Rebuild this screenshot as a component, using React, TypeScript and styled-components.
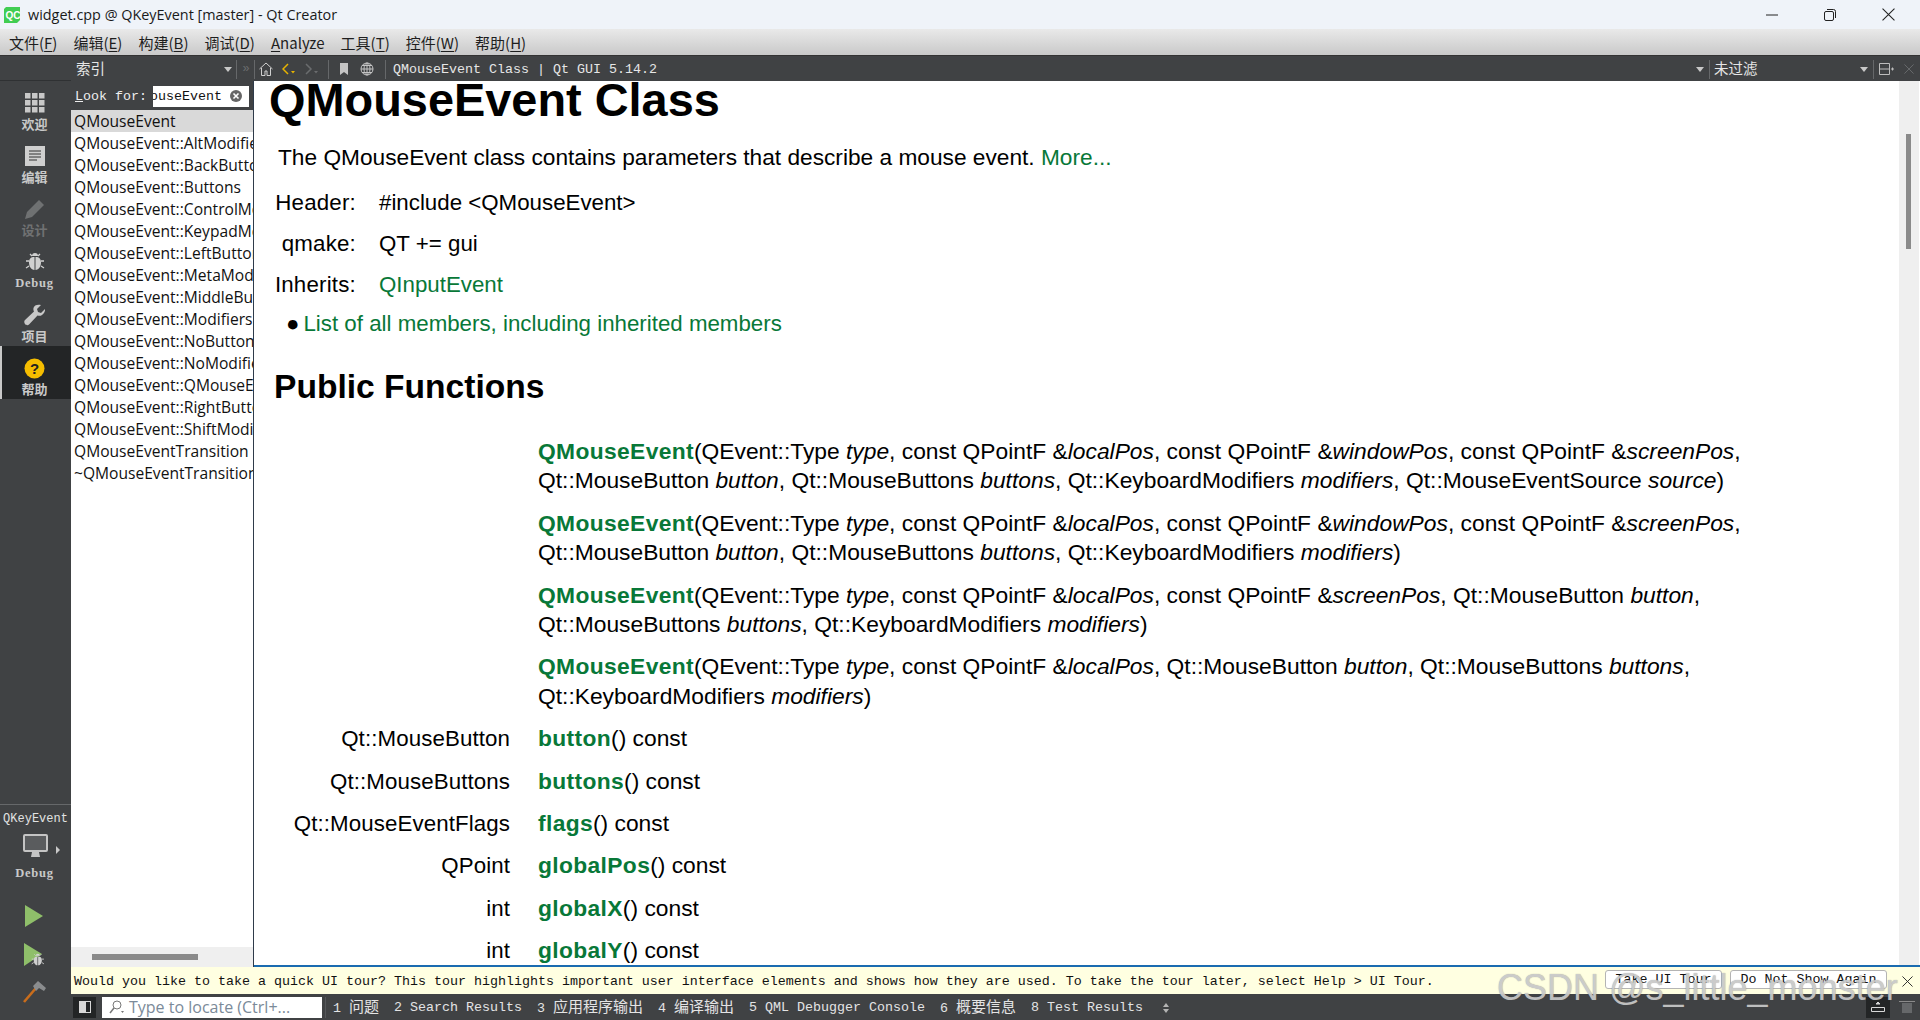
import React from 'react';
import styled, {createGlobalStyle} from 'styled-components';

const MONO = `"Liberation Mono", "Noto Sans CJK SC", monospace`;
const UI = `"Open Sans", "Noto Sans CJK SC", sans-serif`;
const CJK = `"Noto Sans CJK SC", sans-serif`;
const DARK = '#404244';
const GREEN = '#087838';

const Global = createGlobalStyle`
  html, body { margin: 0; padding: 0; overflow: hidden; background: ${DARK}; }
  * { box-sizing: border-box; }
`;

const Window = styled.div`
  position: relative;
  width: 1920px;
  height: 1020px;
  display: flex;
  flex-direction: column;
  overflow: hidden;
`;

const TitleBar = styled.div`
  height: 29px;
  background: #eff3f9;
  display: flex;
  align-items: center;
  padding: 0 3px 0 4px;
  font: 14.4px ${UI};
  color: #1a1a1a;
`;
const TitleText = styled.span`
  margin-left: 8px;
  flex: 1;
`;
const WinBtn = styled.div`
  width: 58px;
  height: 29px;
  display: flex;
  align-items: center;
  justify-content: center;
`;

const MenuBar = styled.div`
  height: 27px;
  background: linear-gradient(#e9e9e9, #c9c9c9);
  border-bottom: 1px solid #333;
  display: flex;
  align-items: center;
  padding-left: 1px;
  font: 15px ${CJK};
  color: #1e1e1e;
`;
const MenuItem = styled.span`
  padding: 0 8px;
  u { text-underline-offset: 2px; }
`;

const Main = styled.div`
  flex: 1;
  display: flex;
  min-height: 0;
`;

const Rail = styled.div`
  width: 71px;
  background: ${DARK};
  display: flex;
  flex-direction: column;
  align-items: stretch;
  padding-bottom: 10px;
`;
const RailTop = styled.div`
  height: 25px;
  border-bottom: 1px solid #2f3133;
`;
const RailItem = styled.div<{$active?: boolean; $dim?: boolean}>`
  height: 53px;
  display: flex;
  flex-direction: column;
  align-items: center;
  padding: 11px 2px 0 0;
  background: ${p => (p.$active ? '#232526' : 'transparent')};
  box-shadow: ${p => (p.$active ? 'inset 2px 0 0 #c8c8c8' : 'none')};
  opacity: ${p => (p.$dim ? 0.35 : 1)};
`;
const IconSlot = styled.div`
  height: 22px;
  display: flex;
  align-items: center;
  justify-content: center;
`;
const RailLabel = styled.span<{$mono?: boolean}>`
  margin-top: 2px;
  font: bold ${p => (p.$mono ? '12.5px' : '13px')} ${p => (p.$mono ? `"Liberation Serif", serif` : CJK)};
  line-height: 16px;
  letter-spacing: ${p => (p.$mono ? '0.8px' : '0')};
  color: #c9c9c9;
`;
const RailSpacer = styled.div`
  flex: 1;
  border-bottom: 1px solid #66686a;
`;
const KitName = styled.div`
  height: 28px;
  text-align: center;
  font: 12px/28px ${MONO};
  color: #e2e2e2;
`;
const KitIcon = styled.div`
  height: 27px;
  display: flex;
  align-items: center;
  padding-left: 23px;
`;
const KitArrow = styled.div`
  width: 0;
  height: 0;
  margin: 6px 0 0 8px;
  border-top: 4px solid transparent;
  border-bottom: 4px solid transparent;
  border-left: 4px solid #c8c8c8;
`;
const KitLabel = styled.div`
  height: 26px;
  margin-bottom: 10px;
  padding-right: 2px;
  font: bold 12.5px/26px "Liberation Serif", serif;
  letter-spacing: 0.8px;
  text-align: center;
  color: #c9c9c9;
`;
const RunBtn = styled.div<{$h: number}>`
  height: ${p => p.$h}px;
  padding-right: 2px;
  display: flex;
  align-items: center;
  justify-content: center;
`;

const Workspace = styled.div`
  flex: 1;
  min-width: 0;
  display: flex;
  flex-direction: column;
`;

const Toolbar = styled.div`
  height: 25px;
  padding-top: 1px;
  background: ${DARK};
  display: flex;
  align-items: center;
  color: #e6e6e6;
  font: 13.33px ${MONO};
`;
const ComboCell = styled.div`
  width: 153px;
  height: 22px;
  flex: none;
  padding-left: 5px;
  font: 14.5px/20px ${CJK};
`;
const ToolBtn = styled.div<{$w: number}>`
  width: ${p => p.$w}px;
  height: 24px;
  flex: none;
  display: flex;
  align-items: center;
  justify-content: center;
`;
const ToolSep = styled.div`
  width: 1px;
  height: 19px;
  flex: none;
  background: #66686a;
`;
const Overflow = styled.span`
  font-size: 12px;
  letter-spacing: -1px;
  color: #6a6c6e;
`;
const DocTitle = styled.div`
  flex: 1;
  padding-left: 7px;
  white-space: pre;
`;
const FilterLabel = styled.div`
  width: 150px;
  height: 22px;
  flex: none;
  padding-left: 4px;
  font: 14.5px/20px ${CJK};
`;
const Caret = styled.div`
  width: 0;
  height: 0;
  flex: none;
  border-left: 4px solid transparent;
  border-right: 4px solid transparent;
  border-top: 5px solid #c8c8c8;
`;

const HelpBody = styled.div`
  flex: 1;
  min-height: 0;
  display: flex;
`;

const IndexPanel = styled.div`
  width: 183px;
  flex: none;
  display: flex;
  flex-direction: column;
  background: #fff;
  border-right: 1px solid #2f3b4a;
`;
const LookFor = styled.div`
  height: 29px;
  flex: none;
  background: ${DARK};
  display: flex;
  align-items: center;
  padding: 1px 0 0 4px;
  color: #eee;
  font: 13.33px ${MONO};
`;
const LookInput = styled.div`
  width: 96px;
  height: 21px;
  margin-left: 6px;
  background: #fff;
  color: #111;
  display: flex;
  align-items: center;
  overflow: hidden;
  padding-right: 7px;
  justify-content: flex-end;
  gap: 8px;
`;
const LookText = styled.span`
  flex: none;
  white-space: nowrap;
`;
const IndexList = styled.div`
  flex: 1;
  overflow: hidden;
`;
const IndexRow = styled.div<{$selected?: boolean}>`
  height: 22px;
  padding-left: 3px;
  font: 15.6px/22px ${UI};
  color: #111;
  white-space: nowrap;
  overflow: hidden;
  background: ${p => (p.$selected ? '#d9d9d9' : 'transparent')};
`;
const HScroll = styled.div`
  height: 20px;
  flex: none;
  background: #efefef;
  padding: 7px 0 0 21px;
`;
const HThumb = styled.div`
  width: 106px;
  height: 6px;
  background: #8a8a8a;
`;

const DocFrame = styled.div`
  flex: 1;
  min-width: 0;
  display: flex;
  background: #fff;
  border-bottom: 2px solid #1a6bb0;
`;
const Doc = styled.div`
  flex: 1;
  min-width: 0;
  overflow: hidden;
  padding-left: 16px;
  font-family: "Liberation Sans", sans-serif;
  color: #000;
`;
const VScroll = styled.div`
  width: 21px;
  flex: none;
  background: #efefef;
  padding: 53px 8px 0 7px;
  border-right: 1px solid #fff;
`;
const VThumb = styled.div`
  height: 115px;
  background: #8a8a8a;
`;

const H1 = styled.h1`
  margin: -1px 0 0 -1px;
  font-size: 46.9px;
  font-weight: bold;
  line-height: 40px;
`;
const Intro = styled.p`
  margin: 22px 0 0 8px;
  font-size: 22.7px;
  line-height: 30px;
`;
const DocLink = styled.a`
  color: ${GREEN};
`;
const Meta = styled.div`
  display: grid;
  grid-template-columns: 86px 1fr;
  column-gap: 23px;
  row-gap: 11px;
  margin-top: 16px;
  font-size: 22.3px;
  line-height: 30px;
`;
const MetaKey = styled.div`
  text-align: right;
  letter-spacing: 0.2px;
`;
const Bullet = styled.div`
  margin: 9px 0 0 16px;
  font-size: 22.3px;
  line-height: 30px;
  display: flex;
  gap: 4px;
`;
const H2 = styled.h2`
  margin: 28px 0 0 4px;
  font-size: 33.6px;
  font-weight: bold;
  line-height: 40px;
`;
const FnTable = styled.div`
  display: grid;
  grid-template-columns: 240px 1fr;
  column-gap: 28px;
  row-gap: 13px;
  margin-top: 30px;
  font-size: 22.8px;
  line-height: 29.4px;
`;
const FnType = styled.div`
  text-align: right;
  font-size: 22.3px;
  letter-spacing: 0.1px;
`;
const FnSig = styled.div`
  padding-right: 90px;
`;
const FnName = styled.b`
  color: ${GREEN};
  letter-spacing: 0.36px;
`;

const TourBar = styled.div`
  height: 27px;
  flex: none;
  background: #ffffe1;
  display: flex;
  align-items: center;
  padding: 1px 0 0 3px;
  font: 13.33px ${MONO};
  color: #111;
`;
const TourText = styled.div`
  flex: 1;
  white-space: nowrap;
`;
const TourBtn = styled.div<{$w: number}>`
  width: ${p => p.$w}px;
  height: 19px;
  margin: 0 8px 3px 0;
  background: #fff;
  border: 1px solid #b4b4b4;
  border-radius: 3px;
  text-align: center;
  line-height: 17px;
`;
const TourClose = styled.div`
  width: 25px;
  display: flex;
  justify-content: center;
`;

const StatusBar = styled.div`
  height: 26px;
  flex: none;
  background: ${DARK};
  display: flex;
  align-items: center;
  color: #e4e4e4;
  font: 13.33px ${MONO};
`;
const SideToggle = styled.div`
  width: 23px;
  height: 21px;
  margin-left: 2px;
  background: #232526;
  display: flex;
  align-items: center;
  justify-content: center;
`;
const Locate = styled.div`
  width: 220px;
  height: 21px;
  margin: 0 3px 0 6px;
  background: #fff;
  display: flex;
  align-items: center;
  gap: 4px;
  padding-left: 7px;
  font: 16px ${UI};
  color: #7b8a99;
  white-space: nowrap;
  overflow: hidden;
`;
const Tabs = styled.div`
  flex: 1;
  display: flex;
  align-items: center;
  gap: 15px;
  padding: 1px 0 0 7px;
  border-left: 1px solid #55575a;
  height: 21px;
`;
const Tab = styled.span`
  white-space: pre;
  line-height: 18px;
`;
const TabCjk = styled.span`
  font: 15px/15px ${CJK};
`;
const TabUpDown = styled.div`
  display: flex;
  flex-direction: column;
  gap: 2px;
  margin-left: 5px;
`;
const ArrowUp = styled.div`
  width: 0;
  height: 0;
  border-left: 3px solid transparent;
  border-right: 3px solid transparent;
  border-bottom: 4px solid #b4b4b4;
`;
const ArrowDown = styled(ArrowUp)`
  transform: rotate(180deg);
`;
const PaneBtn = styled.div<{$on?: boolean}>`
  width: 24px;
  height: 21px;
  margin-right: ${p => (p.$on ? '5px' : '1px')};
  background: ${p => (p.$on ? '#232526' : 'transparent')};
  display: flex;
  align-items: center;
  justify-content: center;
`;

const Watermark = styled.div`
  position: absolute;
  left: 1497px;
  top: 964px;
  font: 36px/48px "Liberation Sans", sans-serif;
  color: rgba(212, 212, 212, 0.85);
  text-shadow: 0 0 1px rgba(90, 90, 90, 0.6);
  white-space: nowrap;
  pointer-events: none;
`;

const QcLogo = () => (
  <svg width="16" height="16" viewBox="0 0 16 16">
    <path d="M2 0h14v13l-3 3H0V2z" fill="#41cd52" />
    <text x="1.5" y="12" fontSize="10" fontWeight="bold" fontFamily="Liberation Sans" fill="#fff">QC</text>
  </svg>
);
const GridIcon = () => (
  <svg width="20" height="20" viewBox="0 0 20 20" fill="#c8c8c8">
    {[0, 7, 14].flatMap(y => [0, 7, 14].map(x => <rect key={`${x}${y}`} x={x} y={y} width="5.5" height="5.5" />))}
  </svg>
);
const EditIcon = () => (
  <svg width="20" height="20" viewBox="0 0 20 20">
    <rect width="20" height="20" fill="#cfcfcf" />
    <path d="M4 5h12M4 8h12M4 11h12M4 14h8" stroke="#333" strokeWidth="1" />
  </svg>
);
const PencilIcon = () => (
  <svg width="22" height="22" viewBox="0 0 22 22" fill="#c8c8c8">
    <path d="M1 21l2-7L15 2l5 5L8 19z" />
  </svg>
);
const BugIcon = ({size = 20}: {size?: number}) => (
  <svg width={size} height={size} viewBox="0 0 20 20" fill="#d0d0d0">
    <path d="M7 4a3 3 0 016 0z" />
    <path d="M9.5 5v13C6 18 4 14 4 10.5 4 7 5.5 5 9.5 5zM10.5 5c4 0 5.500 2 5.500 5.500 0 3.500-2 7.500-5.500 7.500z" />
    <path d="M5 2l2 2M15 2l-2 2M1 9h3M19 9h-3M1 16l3-2M19 16l-3-2" stroke="#d0d0d0" strokeWidth="1.300" />
  </svg>
);
const WrenchIcon = () => (
  <svg width="22" height="22" viewBox="0 0 22 22" fill="#c8c8c8">
    <path d="M21 5l-4 4-3-1-1-3 4-4c-3-1-7 0-7.500 3-.3 1.500 0 2.500.5 3.500L1 16c-1 1-1 2.500 0 4s3 1.500 4 .5l8.500-9c1.500.5 3 .5 4.500-.5 2-1.500 3.500-4 3-6z" />
  </svg>
);
const HelpIcon = () => (
  <svg width="21" height="21" viewBox="0 0 21 21">
    <circle cx="10.500" cy="10.500" r="10" fill="#f5bd00" />
    <text x="10.500" y="16" textAnchor="middle" fontSize="15" fontWeight="bold" fontFamily="Liberation Sans" fill="#222">?</text>
  </svg>
);
const MonitorIcon = () => (
  <svg width="25" height="25" viewBox="0 0 25 25">
    <rect x="1" y="1" width="23" height="16" rx="1" fill="#5a5c5e" stroke="#c4c4c4" strokeWidth="2" />
    <path d="M9 18h7l1 5H8z" fill="#c4c4c4" />
  </svg>
);
const PlayIcon = () => (
  <svg width="20" height="22" viewBox="0 0 20 22">
    <path d="M0 0l18 11L0 22z" fill="#8fbf6a" />
  </svg>
);
const DebugRunIcon = () => (
  <svg width="22" height="24" viewBox="0 0 22 24">
    <path d="M0 0l18 11L0 23z" fill="#8fbf6a" />
    <g transform="translate(7 10) scale(.68)"><BugIcon size={20} /></g>
  </svg>
);
const HammerIcon = () => (
  <svg width="24" height="24" viewBox="0 0 24 24">
    <path d="M1 22L13 8" stroke="#c96d1c" strokeWidth="2.600" />
    <path d="M10 6l5-5 8 7-2 3-5-3-3 3z" fill="#8a8c8e" />
  </svg>
);

const HomeIcon = () => (
  <svg width="14" height="14" viewBox="0 0 14 14" fill="none" stroke="#d0d0d0">
    <path d="M.5 7L7 1l6.500 6M2.500 6v7.500h3.500V9h2v4.500h3.500V6" />
  </svg>
);
const ChevronIcon = ({dir, color}: {dir: 'left' | 'right'; color: string}) => (
  <svg width="14" height="12" viewBox="0 0 14 12" fill="none">
    <path d={dir === 'left' ? 'M6 1L1 6l5 5' : 'M1 1l5 5-5 5'} stroke={color} strokeWidth="1.500" />
    <path d="M9 8h4l-2 2.500z" fill={color} />
  </svg>
);
const BookmarkIcon = () => (
  <svg width="8" height="12" viewBox="0 0 8 12"><path d="M0 0h8v12L4 9l-4 3z" fill="#c4c4c4" /></svg>
);
const GlobeIcon = () => (
  <svg width="14" height="14" viewBox="0 0 14 14" fill="none" stroke="#c4c4c4">
    <circle cx="7" cy="7" r="6" />
    <ellipse cx="7" cy="7" rx="3" ry="6" />
    <path d="M1 7h12M2 3.500h10M2 10.500h10M7 1v12" />
  </svg>
);
const SplitIcon = () => (
  <svg width="15" height="12" viewBox="0 0 15 12" fill="none" stroke="#bdbdbd">
    <path d="M.5.500h10v11H.5zM.5 6h10M12 6h3M13.500 4.500v3" />
  </svg>
);
const CloseX = ({size = 12, color = '#222'}: {size?: number; color?: string}) => (
  <svg width={size} height={size} viewBox="0 0 12 12"><path d="M.5.500l11 11M11.500.500l-11 11" stroke={color} /></svg>
);
const ClearIcon = () => (
  <svg width="12" height="12" viewBox="0 0 12 12" style={{flex: 'none'}}>
    <circle cx="6" cy="6" r="6" fill="#666" />
    <path d="M3.500 3.500l5 5M8.500 3.500l-5 5" stroke="#fff" strokeWidth="1.600" />
  </svg>
);
const SearchIcon = () => (
  <svg width="16" height="14" viewBox="0 0 16 14" fill="none" stroke="#777" style={{flex: 'none'}}>
    <circle cx="8" cy="5" r="4" />
    <path d="M5 8l-4 5" strokeWidth="1.500" />
    <path d="M12 11h3l-1.500 2z" fill="#777" stroke="none" />
  </svg>
);

const indexEntries = [
  'QMouseEvent',
  'QMouseEvent::AltModifier',
  'QMouseEvent::BackButton',
  'QMouseEvent::Buttons',
  'QMouseEvent::ControlModifier',
  'QMouseEvent::KeypadModifier',
  'QMouseEvent::LeftButton',
  'QMouseEvent::MetaModifier',
  'QMouseEvent::MiddleButton',
  'QMouseEvent::Modifiers',
  'QMouseEvent::NoButton',
  'QMouseEvent::NoModifier',
  'QMouseEvent::QMouseEvent',
  'QMouseEvent::RightButton',
  'QMouseEvent::ShiftModifier',
  'QMouseEventTransition',
  '~QMouseEventTransition',
];

const menus: [string, string, string][] = [
  ['文件(', 'F', ')'],
  ['编辑(', 'E', ')'],
  ['构建(', 'B', ')'],
  ['调试(', 'D', ')'],
  ['', 'A', 'nalyze'],
  ['工具(', 'T', ')'],
  ['控件(', 'W', ')'],
  ['帮助(', 'H', ')'],
];

const tabs: [string, string, boolean][] = [
  ['1 ', '问题', true],
  ['2 ', 'Search Results', false],
  ['3 ', '应用程序输出', true],
  ['4 ', '编译输出', true],
  ['5 ', 'QML Debugger Console', false],
  ['6 ', '概要信息', true],
  ['8 ', 'Test Results', false],
];

const members: [string, string][] = [
  ['Qt::MouseButton', 'button'],
  ['Qt::MouseButtons', 'buttons'],
  ['Qt::MouseEventFlags', 'flags'],
  ['QPoint', 'globalPos'],
  ['int', 'globalX'],
  ['int', 'globalY'],
];

export default function App() {
  return (
    <Window>
      <Global />
      <TitleBar>
        <QcLogo />
        <TitleText>widget.cpp @ QKeyEvent [master] - Qt Creator</TitleText>
        <WinBtn>
          <svg width="12" height="2" viewBox="0 0 12 2"><path d="M0 1h12" stroke="#222" /></svg>
        </WinBtn>
        <WinBtn>
          <svg width="12" height="12" viewBox="0 0 12 12" fill="none" stroke="#222">
            <rect x=".5" y="2.500" width="9" height="9" rx="1.500" />
            <path d="M3 .500h6.500a2 2 0 012 2V9" />
          </svg>
        </WinBtn>
        <WinBtn><CloseX size={13} /></WinBtn>
      </TitleBar>
      <MenuBar>
        {menus.map(([a, u, b]) => (
          <MenuItem key={u}>{a}<u>{u}</u>{b}</MenuItem>
        ))}
      </MenuBar>
      <Main>
        <Rail>
          <RailTop />
          <RailItem><IconSlot><GridIcon /></IconSlot><RailLabel>欢迎</RailLabel></RailItem>
          <RailItem><IconSlot><EditIcon /></IconSlot><RailLabel>编辑</RailLabel></RailItem>
          <RailItem $dim><IconSlot><PencilIcon /></IconSlot><RailLabel>设计</RailLabel></RailItem>
          <RailItem><IconSlot><BugIcon /></IconSlot><RailLabel $mono>Debug</RailLabel></RailItem>
          <RailItem><IconSlot><WrenchIcon /></IconSlot><RailLabel>项目</RailLabel></RailItem>
          <RailItem $active><IconSlot><HelpIcon /></IconSlot><RailLabel>帮助</RailLabel></RailItem>
          <RailSpacer />
          <KitName>QKeyEvent</KitName>
          <KitIcon><MonitorIcon /><KitArrow /></KitIcon>
          <KitLabel>Debug</KitLabel>
          <RunBtn $h={40}><PlayIcon /></RunBtn>
          <RunBtn $h={38}><DebugRunIcon /></RunBtn>
          <RunBtn $h={36}><HammerIcon /></RunBtn>
        </Rail>
        <Workspace>
          <Toolbar>
            <ComboCell>索引</ComboCell>
            <ToolBtn $w={8}><Caret /></ToolBtn>
            <ToolBtn $w={4} />
            <ToolSep />
            <ToolBtn $w={17}><Overflow>»</Overflow></ToolBtn>
            <ToolSep />
            <ToolBtn $w={22}><HomeIcon /></ToolBtn>
            <ToolBtn $w={24}><ChevronIcon dir="left" color="#e8b400" /></ToolBtn>
            <ToolBtn $w={22}><ChevronIcon dir="right" color="#6a6c6e" /></ToolBtn>
            <ToolBtn $w={5} />
            <ToolSep />
            <ToolBtn $w={29}><BookmarkIcon /></ToolBtn>
            <ToolBtn $w={18}><GlobeIcon /></ToolBtn>
            <ToolBtn $w={9} />
            <ToolSep />
            <DocTitle>QMouseEvent Class | Qt GUI 5.14.2</DocTitle>
            <Caret />
            <ToolBtn $w={5} />
            <ToolSep />
            <FilterLabel>未过滤</FilterLabel>
            <Caret />
            <ToolBtn $w={5} />
            <ToolSep />
            <ToolBtn $w={24}><SplitIcon /></ToolBtn>
            <ToolBtn $w={22}><CloseX size={10} color="#6f7173" /></ToolBtn>
          </Toolbar>
          <HelpBody>
            <IndexPanel>
              <LookFor>
                <span><u>L</u>ook for:</span>
                <LookInput>
                  <LookText>QMouseEvent</LookText>
                  <ClearIcon />
                </LookInput>
              </LookFor>
              <IndexList>
                {indexEntries.map((name, i) => (
                  <IndexRow key={name} $selected={i === 0}>{name}</IndexRow>
                ))}
              </IndexList>
              <HScroll><HThumb /></HScroll>
            </IndexPanel>
            <DocFrame>
              <Doc>
                <H1>QMouseEvent Class</H1>
                <Intro>
                  The QMouseEvent class contains parameters that describe a mouse event. <DocLink>More...</DocLink>
                </Intro>
                <Meta>
                  <MetaKey>Header:</MetaKey><div>#include &lt;QMouseEvent&gt;</div>
                  <MetaKey>qmake:</MetaKey><div>QT += gui</div>
                  <MetaKey>Inherits:</MetaKey><DocLink>QInputEvent</DocLink>
                </Meta>
                <Bullet><span>●</span><DocLink>List of all members, including inherited members</DocLink></Bullet>
                <H2>Public Functions</H2>
                <FnTable>
                  <div />
                  <FnSig>
                    <FnName>QMouseEvent</FnName>(QEvent::Type <i>type</i>, const QPointF &amp;<i>localPos</i>, const QPointF &amp;<i>windowPos</i>, const QPointF &amp;<i>screenPos</i>, Qt::MouseButton <i>button</i>, Qt::MouseButtons <i>buttons</i>, Qt::KeyboardModifiers <i>modifiers</i>, Qt::MouseEventSource <i>source</i>)
                  </FnSig>
                  <div />
                  <FnSig>
                    <FnName>QMouseEvent</FnName>(QEvent::Type <i>type</i>, const QPointF &amp;<i>localPos</i>, const QPointF &amp;<i>windowPos</i>, const QPointF &amp;<i>screenPos</i>, Qt::MouseButton <i>button</i>, Qt::MouseButtons <i>buttons</i>, Qt::KeyboardModifiers <i>modifiers</i>)
                  </FnSig>
                  <div />
                  <FnSig>
                    <FnName>QMouseEvent</FnName>(QEvent::Type <i>type</i>, const QPointF &amp;<i>localPos</i>, const QPointF &amp;<i>screenPos</i>, Qt::MouseButton <i>button</i>, Qt::MouseButtons <i>buttons</i>, Qt::KeyboardModifiers <i>modifiers</i>)
                  </FnSig>
                  <div />
                  <FnSig>
                    <FnName>QMouseEvent</FnName>(QEvent::Type <i>type</i>, const QPointF &amp;<i>localPos</i>, Qt::MouseButton <i>button</i>, Qt::MouseButtons <i>buttons</i>, Qt::KeyboardModifiers <i>modifiers</i>)
                  </FnSig>
                  {members.map(([type, name]) => (
                    <React.Fragment key={name}>
                      <FnType>{type}</FnType>
                      <div><FnName>{name}</FnName>() const</div>
                    </React.Fragment>
                  ))}
                </FnTable>
              </Doc>
              <VScroll><VThumb /></VScroll>
            </DocFrame>
          </HelpBody>
          <TourBar>
            <TourText>Would you like to take a quick UI tour? This tour highlights important user interface elements and shows how they are used. To take the tour later, select Help &gt; UI Tour.</TourText>
            <TourBtn $w={117}>Take UI Tour</TourBtn>
            <TourBtn $w={157}>Do Not Show Again</TourBtn>
            <TourClose><CloseX size={11} /></TourClose>
          </TourBar>
          <StatusBar>
            <SideToggle>
              <svg width="12" height="12" viewBox="0 0 12 12">
                <rect x=".5" y=".5" width="11" height="11" fill="none" stroke="#d8d8d8" />
                <rect x="1" y="1" width="6" height="10" fill="#d8d8d8" />
              </svg>
            </SideToggle>
            <Locate>
              <SearchIcon />
              Type to locate (Ctrl+...
            </Locate>
            <Tabs>
              {tabs.map(([n, label, cjk]) => (
                <Tab key={n}>{n}{cjk ? <TabCjk>{label}</TabCjk> : label}</Tab>
              ))}
              <TabUpDown><ArrowUp /><ArrowDown /></TabUpDown>
            </Tabs>
            <PaneBtn $on>
              <svg width="14" height="12" viewBox="0 0 14 12" fill="none" stroke="#d8d8d8">
                <path d="M.5 6.500h13v4H.5z" />
                <path d="M5 3l2-2 2 2z" fill="#d8d8d8" />
              </svg>
            </PaneBtn>
            <PaneBtn>
              <svg width="16" height="12" viewBox="0 0 16 12">
                <path d="M0 .5h16" stroke="#8a8a8a" />
                <rect x="3" y="2" width="10" height="10" fill="#66686a" />
              </svg>
            </PaneBtn>
          </StatusBar>
        </Workspace>
      </Main>
      <Watermark>CSDN @s_little_monster</Watermark>
    </Window>
  );
}
